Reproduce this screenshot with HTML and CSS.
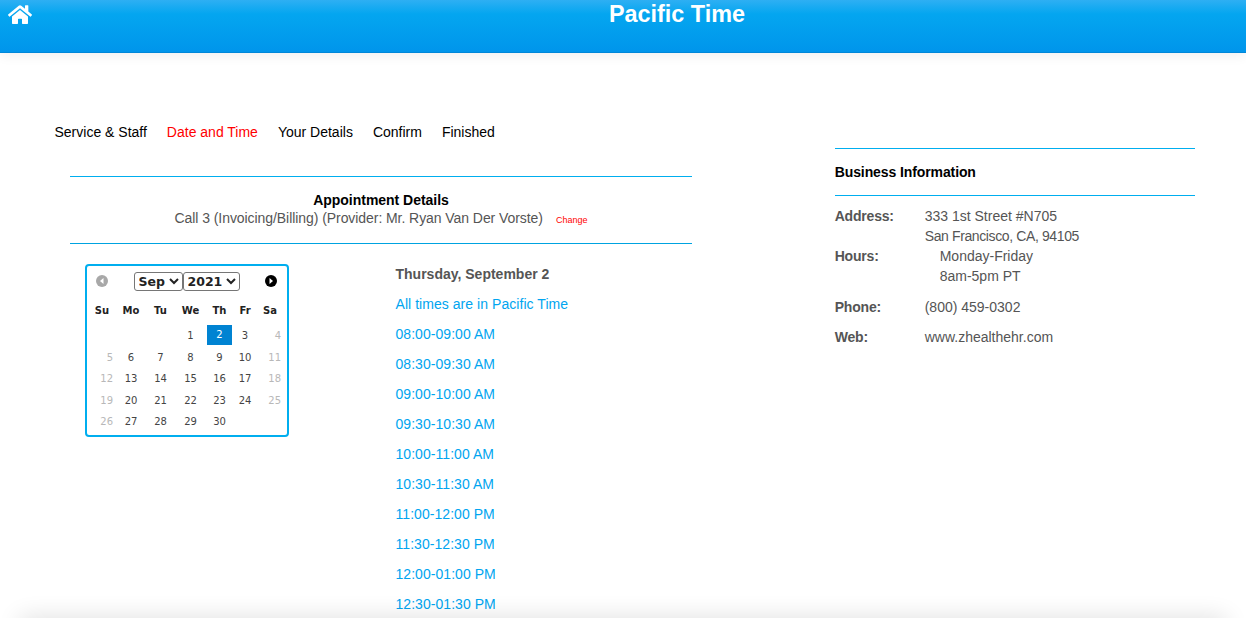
FILE: index.html
```html
<!DOCTYPE html>
<html lang="en">
<head>
<meta charset="utf-8">
<title>Pacific Time</title>
<link rel="stylesheet" href="styles.css">
</head>
<body>
<header class="topbar">
  <a class="home" href="#" aria-label="Home">
    <svg class="home-icon" viewBox="0 0 576 512"><path fill="#fff" d="M280.37 148.26L96 300.11V464a16 16 0 0 0 16 16l112.06-.29a16 16 0 0 0 15.92-16V368a16 16 0 0 1 16-16h64a16 16 0 0 1 16 16v95.64a16 16 0 0 0 16 16.05L464 480a16 16 0 0 0 16-16V300L295.67 148.26a12.19 12.19 0 0 0-15.3 0zM571.6 251.47L488 182.56V44.05a12 12 0 0 0-12-12h-56a12 12 0 0 0-12 12v72.61L318.47 43a48 48 0 0 0-61 0L4.34 251.47a12 12 0 0 0-1.6 16.9l25.5 31A12 12 0 0 0 45.15 301l235.22-193.74a12.19 12.19 0 0 1 15.3 0L530.9 301a12 12 0 0 0 16.9-1.6l25.5-31a12 12 0 0 0-1.7-16.93z"/></svg>
  </a>
  <h1 class="page-title">Pacific Time</h1>
</header>

<main class="layout">
  <section class="booking">
    <nav class="steps">
      <span>Service &amp; Staff</span>
      <span class="step-active">Date and Time</span>
      <span>Your Details</span>
      <span>Confirm</span>
      <span>Finished</span>
    </nav>

    <div class="details">
      <div class="details-title">Appointment Details</div>
      <div class="details-line">Call 3 (Invoicing/Billing) (Provider: Mr. Ryan Van Der Vorste)<a class="change" href="#">Change</a></div>
    </div>

    <div class="picker">
      <div class="calendar">
        <div class="cal-head">
          <svg class="cal-arrow" viewBox="0 0 12 12"><circle cx="6" cy="6" r="6" fill="#a8a8a8"/><path fill="#fff" d="M7.5 3v6L4 6z"/></svg>
          <div class="cal-selects">
            <select class="sel-month"><option>Sep</option></select>
            <select class="sel-year"><option>2021</option></select>
          </div>
          <svg class="cal-arrow" viewBox="0 0 12 12"><circle cx="6" cy="6" r="6" fill="#000"/><path fill="#fff" d="M4.5 3v6L8 6z"/></svg>
        </div>
        <div class="cal-grid cal-names">
          <b>Su</b><b>Mo</b><b>Tu</b><b>We</b><b>Th</b><b>Fr</b><b>Sa</b>
        </div>
        <div class="cal-grid cal-days">
          <i></i><i></i><i></i><span>1</span><span class="today">2</span><span>3</span><span class="off sat">4</span>
          <span class="off sun">5</span><span>6</span><span>7</span><span>8</span><span>9</span><span>10</span><span class="off sat">11</span>
          <span class="off sun">12</span><span>13</span><span>14</span><span>15</span><span>16</span><span>17</span><span class="off sat">18</span>
          <span class="off sun">19</span><span>20</span><span>21</span><span>22</span><span>23</span><span>24</span><span class="off sat">25</span>
          <span class="off sun">26</span><span>27</span><span>28</span><span>29</span><span>30</span>
        </div>
      </div>

      <div class="times">
        <div class="times-date">Thursday, September 2</div>
        <div class="time">All times are in Pacific Time</div>
        <a class="time" href="#">08:00-09:00 AM</a>
        <a class="time" href="#">08:30-09:30 AM</a>
        <a class="time" href="#">09:00-10:00 AM</a>
        <a class="time" href="#">09:30-10:30 AM</a>
        <a class="time" href="#">10:00-11:00 AM</a>
        <a class="time" href="#">10:30-11:30 AM</a>
        <a class="time" href="#">11:00-12:00 PM</a>
        <a class="time" href="#">11:30-12:30 PM</a>
        <a class="time" href="#">12:00-01:00 PM</a>
        <a class="time" href="#">12:30-01:30 PM</a>
      </div>
    </div>
  </section>

  <aside class="info">
    <h2 class="info-title">Business Information</h2>
    <dl class="info-list">
      <div class="info-row"><dt>Address:</dt><dd>333 1st Street #N705<br><span class="tight">San Francisco, CA, 94105</span></dd></div>
      <div class="info-row"><dt>Hours:</dt><dd class="indent">Monday-Friday<br>8am-5pm PT</dd></div>
      <div class="info-row gap"><dt>Phone:</dt><dd>(800) 459-0302</dd></div>
      <div class="info-row gap"><dt>Web:</dt><dd>www.zhealthehr.com</dd></div>
    </dl>
  </aside>
</main>
<div class="page-foot"></div>
</body>
</html>
```

FILE: styles.css
```css
* { box-sizing: border-box; }
html, body { height: 100%; }
body {
  margin: 0;
  overflow: hidden;
  background: #fff;
  color: #555;
  font: 14px/20px "Liberation Sans", Arial, sans-serif;
}
a { text-decoration: none; color: inherit; }

.topbar {
  position: relative;
  height: 53px;
  background: linear-gradient(#2eaff3 0, #04a6f0 14px, #0095eb 52px);
  border-bottom: 1px solid #0087d9;
  box-shadow: 0 2px 12px rgba(0, 0, 0, .07);
}
.home { position: absolute; left: 8px; top: 4px; line-height: 0; }
.home-icon { width: 24px; height: 21.33px; }
.page-title {
  margin: 0;
  padding-left: 108px;
  text-align: center;
  color: #fff;
  font-size: 23.4px;
  font-weight: 700;
  line-height: 28px;
}

.layout {
  display: grid;
  grid-template-columns: 834.7px 360px;
}
.booking { padding: 69px 0 0 54.5px; }
.steps {
  display: flex;
  gap: 20px;
  color: #000;
  line-height: 20px;
}
.step-active { color: #f00; }

.details {
  width: 622px;
  height: 68px;
  margin: 34px 0 0 15.5px;
  border-top: 1px solid #00aeef;
  border-bottom: 1px solid #00a3e0;
  padding-top: 14px;
  text-align: center;
}
.details-title { color: #000; font-weight: 700; line-height: 18px; letter-spacing: -.03px; }
.details-line { line-height: 18px; letter-spacing: -.065px; }
.change { margin-left: 13px; color: #f00; font-size: 9px; letter-spacing: 0; }

.picker { display: flex; align-items: flex-start; margin: 20px 0 0 30.5px; }

.calendar {
  flex: none;
  width: 204px;
  height: 173px;
  margin-right: 106.5px;
  border: 2px solid #00aeef;
  border-radius: 4px;
  color: #333;
  font-family: "DejaVu Sans", Verdana, sans-serif;
  font-size: 10px;
}
.cal-head {
  display: flex;
  align-items: center;
  justify-content: space-between;
  height: 19px;
  margin-top: 6px;
  padding: 0 10px 1px 9px;
}
.cal-arrow { width: 12px; height: 12px; flex: none; }
.cal-selects { display: flex; }
.cal-selects select {
  height: 19px;
  margin: 0;
  padding: 0;
  color: #222;
  font: 700 12.5px "DejaVu Sans", Verdana, sans-serif;
  background: #fff;
  border: 1px solid #767676;
  border-radius: 3px;
}
.sel-month { width: 49px; }
.sel-year { width: 57px; }

.cal-grid {
  display: grid;
  grid-template-columns: 26px 32px 27px 33px 25px 26px 24px;
  margin-left: 2px;
  text-align: center;
}
.cal-names { margin-top: 8px; height: 24px; align-items: center; color: #222; }
.cal-names b { font-size: 10px; }
.cal-days {
  grid-template-columns: 25px 32px 27px 33px 25px 26px 23px;
  grid-auto-rows: 21.5px;
  margin: 2px 0 0 3px;
  line-height: 21.6px;
  color: #444;
}
.today { align-self: start; height: 20px; background: #0083d2; color: #fff; line-height: 20px; }
.off { color: #b8b8b8; text-align: right; }
.sun { padding-right: 2px; }
.sat { padding-right: 0; }

.times-date { font-weight: 700; height: 30px; line-height: 20px; }
.time { display: block; height: 30px; line-height: 20px; color: #00a5f0; letter-spacing: .05px; }

.info { padding-top: 95px; }
.info-title {
  height: 48px;
  margin: 0;
  border-top: 1px solid #00aeef;
  border-bottom: 1px solid #00aeef;
  color: #000;
  font-size: 14px;
  font-weight: 700;
  line-height: 46px;
  letter-spacing: -.1px;
}
.info-list { margin: 10px 0 0; }
.info-row { display: flex; }
.info-row dt { width: 90px; font-weight: 700; letter-spacing: -.2px; }
.info-row dd { margin: 0; }
.info-row .indent { padding-left: 15px; }
.tight { letter-spacing: -.38px; }
.gap { margin-top: 11px; }
.gap + .gap { margin-top: 10px; }

.page-foot {
  position: fixed;
  left: 20px;
  right: 20px;
  bottom: -20px;
  height: 20px;
  box-shadow: 0 0 24px rgba(0, 0, 0, .14);
}
```
